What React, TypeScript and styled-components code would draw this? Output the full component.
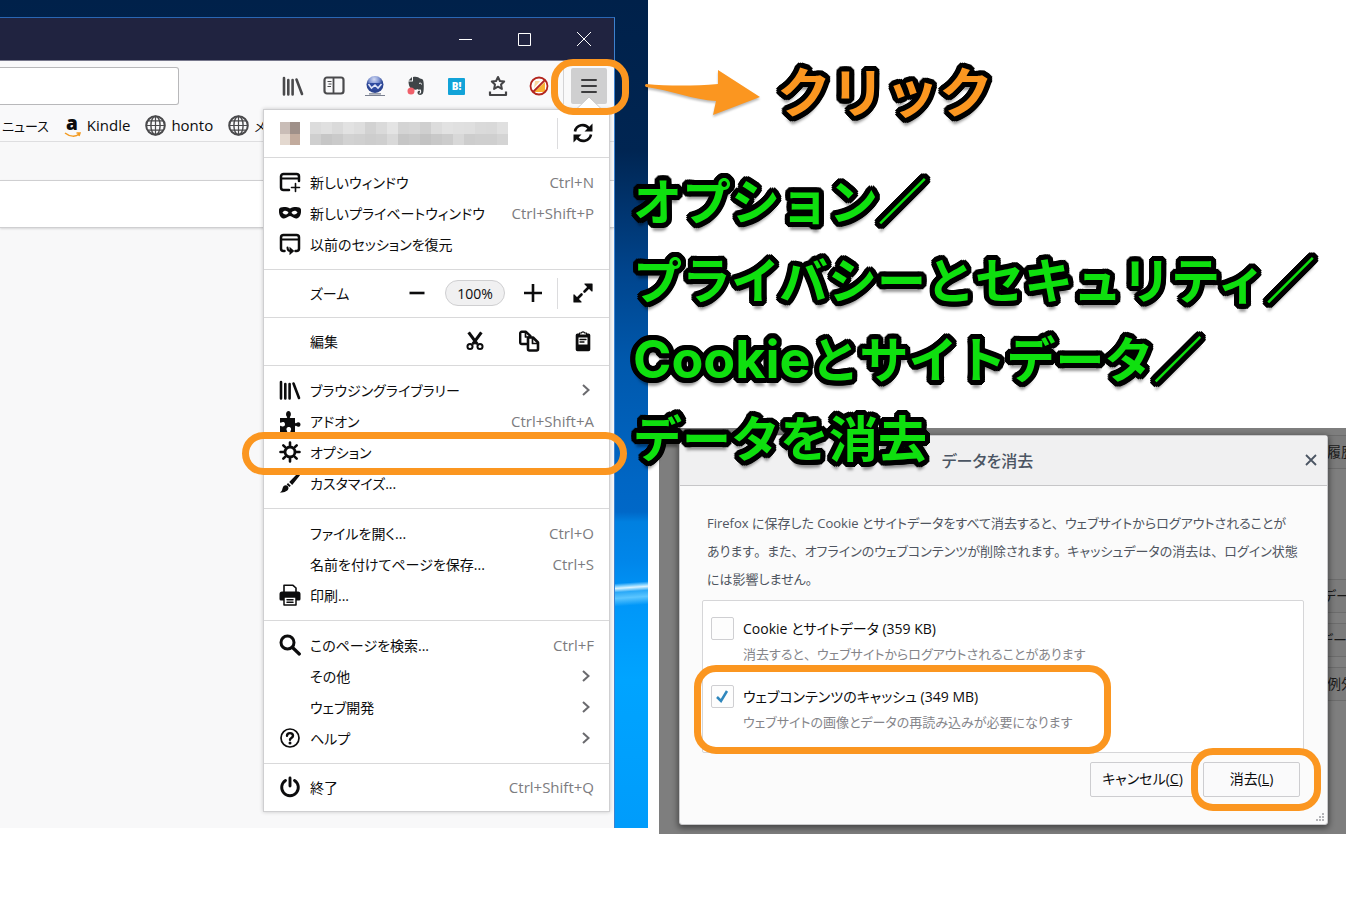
import React from 'react';
import styled, { createGlobalStyle, css } from 'styled-components';

const ORANGE = '#fb9620';

const Global = createGlobalStyle`
  * { box-sizing: border-box; }
  body {
    margin: 0;
    background: #fff;
    color: #0c0c0d;
    font-family: "Open Sans", "Noto Sans CJK JP", sans-serif;
    font-size: 14px;
    font-feature-settings: "palt";
  }
  button, input { font: inherit; color: inherit; font-feature-settings: inherit; }
  button { background: none; border: 0; padding: 0; margin: 0; }
  svg { display: block; }
`;

const Page = styled.main`
  display: grid;
  grid-template-columns: minmax(0, 648fr) minmax(0, 712fr);
  align-items: start;
  overflow: hidden;
`;

const Ring = styled.span<{ $y: number; $l: number; $r: number; $b?: number; $radius: number }>`
  position: absolute;
  z-index: 3;
  top: -${p => p.$y}px;
  bottom: -${p => p.$b ?? p.$y}px;
  left: -${p => p.$l}px;
  right: -${p => p.$r}px;
  border: 7px solid ${ORANGE};
  border-radius: ${p => p.$radius}px;
  pointer-events: none;
`;

/* ---------- desktop and browser window ---------- */

const Desktop = styled.section`
  padding: 17px 33px 0 0;
  background:
    linear-gradient(176deg, transparent 625px, #7fd0ff 628px, #d9f3ff 630px, #2aa9f8 634px, #5cc6ff 640px, transparent 648px) no-repeat,
    linear-gradient(180deg, #00214a 0, #002552 150px, #00448c 270px, #0058ac 360px, #0066c4 480px, #0068c8 512px, #0080e0 522px, #0086ea 560px, #0096f8 600px, #00a4ff 680px, #009cfb 826px);
`;

const Window = styled.div`
  border-top: 1px solid #2a66b4;
  border-right: 1px solid #3d82cf;
  background: #f9f9fa;
`;

const TitleBar = styled.header`
  display: flex;
  justify-content: flex-end;
  height: 43px;
  padding-right: 1px;
  background: #202340;
  border-bottom: 1px solid #77788c;
`;

const WindowButton = styled.button`
  display: grid;
  place-items: center;
  width: 59px;
`;

const Toolbar = styled.div`
  display: flex;
  align-items: center;
  height: 48px;
  padding: 2px 7px 0 0;
`;

const UrlInput = styled.input`
  flex: 1;
  min-width: 0;
  height: 38px;
  margin-right: 93px;
  border: 1px solid #b8b8ba;
  border-left: 0;
  border-radius: 0 3px 3px 0;
  background: #fff;
`;

const ToolButton = styled.button`
  display: grid;
  place-items: center;
  width: 41px;
  height: 36px;
  color: #4a4a4c;
`;

const MenuButtonSlot = styled.div`
  position: relative;
  margin-left: 4px;
  padding-left: 7px;
  border-left: 1px solid #d4d4d6;
`;

const MenuButton = styled.button`
  display: grid;
  place-items: center;
  width: 36px;
  height: 36px;
  border-radius: 2px;
  background: #cfcfd0;
`;

const MenuPointer = styled.svg`
  position: absolute;
  z-index: 2;
  right: 6px;
  bottom: -5px;
`;

const Below = styled.div`
  display: grid;
  > * { grid-area: 1 / 1; }
`;

const PageArea = styled.div`
  display: flex;
  flex-direction: column;
  background: #f8f8f9;
`;

const Bookmarks = styled.nav`
  display: flex;
  align-items: center;
  height: 33px;
  padding-left: 2px;
  gap: 15px;
  background: #f9f9fa;
  border-bottom: 1px solid #dedee0;
  overflow: hidden;
`;

const Bookmark = styled.a<{ $kana?: boolean }>`
  display: flex;
  align-items: center;
  flex: none;
  gap: 5px;
  font-size: ${p => (p.$kana ? 13 : 15)}px;
  color: inherit;
  text-decoration: none;
  white-space: nowrap;
`;

const PageBox = styled.div`
  height: 48px;
  margin-top: 38px;
  background: #fff;
  border: solid #cfcfd1;
  border-width: 1px 0;
  box-shadow: 0 1px 2px #0002;
`;

const Menu = styled.div`
  position: relative;
  z-index: 1;
  justify-self: end;
  width: 347px;
  margin: 0 4px 16px 0;
  border: 1px solid #cfcfd1;
  background: #fff;
  box-shadow: 0 0 4px #0003;
`;

const Group = styled.div<{ $single?: boolean; $last?: boolean }>`
  padding: ${p => (p.$single ? '0' : '8px 0 10px')};
  border-bottom: ${p => (p.$last ? 0 : 1)}px solid #d9d9da;
`;

const rowLayout = css`
  position: relative;
  display: flex;
  align-items: center;
  width: 100%;
  text-align: left;
  white-space: nowrap;
`;

const Row = styled.button<{ $tall?: boolean }>`
  ${rowLayout}
  height: ${p => (p.$tall ? 47 : 31)}px;
  padding: 0 15px ${p => (p.$tall ? 2 : 0)}px;
`;

const ControlRow = styled.div`
  ${rowLayout}
  height: 47px;
  padding: 0 15px 1px;
`;

const IconSlot = styled.span`
  display: grid;
  place-items: center;
  flex: none;
  width: 22px;
  margin-right: 9px;
`;

const Label = styled.span`
  flex: 1;
`;

const Shortcut = styled.span`
  font-size: 15px;
  color: #7c7c80;
`;

const ArrowSlot = styled.span`
  padding-right: 3px;
`;

const IconButton = styled.button<{ $gap: number }>`
  display: grid;
  place-items: center;
  width: 22px;
  height: 31px;
  margin-left: ${p => p.$gap}px;
`;

const ZoomReset = styled.button`
  width: 60px;
  height: 26px;
  margin-left: 17px;
  border: 1px solid #cfcfd1;
  border-radius: 13px;
  background: #f0f0f1;
  text-align: center;
`;

const Divider = styled.span`
  width: 1px;
  height: 31px;
  margin-left: 13px;
  background: #dcdcde;
`;

const Mosaic = styled.span<{ $cell: number }>`
  display: grid;
  grid-auto-flow: column;
  grid-template-rows: 12px 11px;
  grid-auto-columns: ${p => p.$cell}px;
`;

const Cell = styled.i<{ $c: string }>`
  background: ${p => p.$c};
`;

/* ---------- right column ---------- */

const Side = styled.section`
  display: flex;
  flex-direction: column;
  padding: 54px 14px 0 11px;
`;

/* Black outline with round corners: copies of the text set on a circle. */
const outlineOffsets = [
  [5, 0], [5, 2], [4, 3], [3, 4], [2, 5], [0, 5], [-2, 5], [-3, 4], [-4, 3], [-5, 2],
  [-5, 0], [-5, -2], [-4, -3], [-3, -4], [-2, -5], [0, -5], [2, -5], [3, -4], [4, -3], [5, -2],
  [3, 0], [0, 3], [-3, 0], [0, -3], [2, 2], [-2, 2], [-2, -2], [2, -2],
];
const outlineShadow = [...outlineOffsets.map(([x, y]) => `${x}px ${y}px 0 #000`), '0 8px 3px #0006'].join(', ');

const outlined = css`
  position: relative;
  z-index: 4;
  margin: 0;
  font-family: Inter, "Noto Sans CJK JP", sans-serif;
  font-weight: 700;
  font-feature-settings: normal;
  white-space: nowrap;
  text-shadow: ${outlineShadow};
`;

const ClickNote = styled.div`
  display: flex;
  align-items: center;
  gap: 13px;
  height: 80px;
  margin-left: -15px;
`;

const ClickText = styled.p`
  ${outlined}
  font-size: 54px;
  line-height: 80px;
  color: ${ORANGE};
`;

const NoteArrow = styled.svg`
  filter: drop-shadow(0 2px 1px #0004);
`;

const Steps = styled.p`
  ${outlined}
  margin: 29px 0 0 -26px;
  font-size: 49px;
  line-height: 79px;
  color: #0fe00f;
`;

const LatinWord = styled.span`
  font-size: 52px;
  line-height: 1;
`;

const Backdrop = styled.div`
  display: flex;
  margin-top: -51px;
  padding: 7px 0 9px 20px;
  background: #7e7e7e;
`;

const Dialog = styled.div`
  position: relative;
  z-index: 1;
  flex: 1;
  min-width: 0;
  border: 1px solid #c9c9cb;
  border-radius: 3px;
  background: #fbfbfb;
  box-shadow: 0 2px 6px 1px #0007;
`;

const DialogHeader = styled.header`
  display: flex;
  align-items: center;
  height: 50px;
  padding: 0 8px 1px 0;
  background: #f0f0f1;
  border-bottom: 1px solid #c6c6c8;
`;

const DialogTitle = styled.h2`
  flex: 1;
  margin: 0 0 0 -7px;
  font-size: 16px;
  font-weight: 500;
  text-align: center;
  color: #4b5563;
`;

const CloseButton = styled.button`
  display: grid;
  place-items: center;
  width: 17px;
  height: 24px;
`;

const DialogBody = styled.div`
  padding: 23px 23px 27px 22px;
`;

const Intro = styled.p`
  margin: 0 0 7px 5px;
  font-size: 13px;
  line-height: 28px;
  color: #4f5560;
  white-space: nowrap;
`;

const FullStop = styled.span`
  font-feature-settings: normal;
`;

const OptionList = styled.div`
  display: flex;
  flex-direction: column;
  gap: 16px;
  height: 153px;
  padding: 15px 8px 0;
  border: 1px solid #d6d6d8;
  border-radius: 2px;
  background: #fff;
`;

const Option = styled.div`
  position: relative;
  display: flex;
  gap: 9px;
  height: 52px;
`;

const CheckWrap = styled.span`
  display: grid;
  flex: none;
  height: 24px;
  place-items: center;
  > * { grid-area: 1 / 1; }
  svg { visibility: hidden; pointer-events: none; }
  input:checked + svg { visibility: visible; }
`;

const Check = styled.input`
  appearance: none;
  width: 23px;
  height: 23px;
  margin: 0;
  border: 1px solid #cfcfd2;
  border-radius: 2px;
  background: #fdfdfd;
`;

const OptionLabel = styled.label`
  display: block;
  line-height: 26px;
  white-space: nowrap;
`;

const OptionHint = styled.span`
  display: block;
  font-size: 13px;
  line-height: 25px;
  color: #85858a;
`;

const HighlightArea = styled.span`
  position: absolute;
  top: 0;
  left: 0;
  width: 384px;
  height: 52px;
  pointer-events: none;
`;

const Actions = styled.div`
  display: flex;
  justify-content: flex-end;
  gap: 8px;
  padding: 9px 4px 0 0;
`;

const ActionButton = styled.button<{ $w: number }>`
  position: relative;
  width: ${p => p.$w}px;
  height: 35px;
  padding-bottom: 3px;
  border: 1px solid #cdcdd0;
  border-radius: 2px;
  background: #fafafb;
`;

const Grip = styled.svg`
  position: absolute;
  right: 2px;
  bottom: 2px;
`;

const Behind = styled.div`
  width: 18px;
  overflow: hidden;
`;

const BehindItem = styled.div<{ $gap: number; $shift: number }>`
  height: 34px;
  margin-top: ${p => p.$gap}px;
  border: solid #6c6c6c;
  border-width: 1px 0;
  background: #7b7b7b;
  line-height: 32px;
  text-indent: -${p => p.$shift}px;
  white-space: nowrap;
  color: #1a1a1a;
`;

/* ---------- icons ---------- */

const Svg = ({ s = 22, children }: { s?: number; children: React.ReactNode }) => (
  <svg width={s} height={s} viewBox="0 0 22 22" fill="none" stroke="currentColor" strokeWidth="2" strokeLinecap="round" strokeLinejoin="round" aria-hidden="true">{children}</svg>
);

const Library = () => (
  <Svg><path d="M2 3v16.500M6.300 5v14.500M10.600 5v14.500M14.500 4.500l5.500 14.500" strokeWidth="2.600" /></Svg>
);
const NewWindow = () => (
  <Svg><path d="M10 19H4.500a2.500 2.500 0 0 1-2.500-2.500V5.500A2.500 2.500 0 0 1 4.500 3h13A2.500 2.500 0 0 1 20 5.500V10" strokeWidth="2.500" /><path d="M2 7.500h18" strokeWidth="1.800" /><path d="M16.500 12.500v8M12.500 16.500h8" strokeWidth="1.600" /></Svg>
);
const Mask = () => (
  <Svg><path fillRule="evenodd" fill="currentColor" stroke="none" d="M0 7.500C.8 4.500 7 4.500 11 6.500 15 4.500 21.200 4.500 22 7.500c.5 4.500-1.500 9-5 9-2.700 0-3.800-2.500-6-2.500s-3.300 2.500-6 2.500c-3.500 0-5.500-4.500-5-9ZM3.500 10.500c1.500 2.600 4.500 2.600 6 .2C8 8.300 5 8 3.500 10.500Zm15 0c-1.500-2.500-4.500-2.200-6 .2 1.500 2.400 4.500 2.400 6-.2Z" /></Svg>
);
const Restore = () => (
  <Svg><path d="M5.500 18H4.500A2.500 2.500 0 0 1 2 15.500V4.500A2.500 2.500 0 0 1 4.500 2h13A2.500 2.500 0 0 1 20 4.500v11a2.500 2.500 0 0 1-2.500 2.500H16.500" strokeWidth="2.500" /><path d="M2 6.500h18" strokeWidth="1.800" /><path d="M8.500 14.500c0 2.500.8 3.500 3 3.500" strokeWidth="2" /><path d="M10.500 13.800l4.800 4.200-4.800 4.200z" fill="currentColor" stroke="none" /></Svg>
);
const Puzzle = () => (
  <Svg><path fill="currentColor" stroke="none" d="M1 8h6.500c.8 0 .9-.8.3-1.400C6.600 5.300 6.800 1 9.500 1s2.900 4.300 1.700 5.600c-.6.600-.5 1.400.3 1.400H16v4.500c0 .8.800 1 1.400.4 1.300-1.200 4.100-1 4.100 1.600s-2.800 2.800-4.100 1.600c-.6-.6-1.400-.4-1.400.4V22h-4c-.7 0-.8-.8-.4-1.300 1-1.200.6-3.700-1.800-3.700s-2.800 2.500-1.800 3.700c.4.500.3 1.300-.4 1.300H1v-5.500c0-.8.600-1 1.200-.5C3.500 17 6 16.700 6 14.300s-2.500-2.600-3.800-1.700c-.6.500-1.200.2-1.200-.5Z" /></Svg>
);
const Gear = () => (
  <Svg><circle cx="11" cy="11" r="5" strokeWidth="2.800" /><path d="M11 1.500v3M11 17.500v3M1.500 11h3M17.500 11h3M4.300 4.300l2.100 2.100M15.600 15.600l2.100 2.100M4.300 17.700l2.100-2.100M15.600 6.400l2.100-2.100" strokeWidth="2.600" /></Svg>
);
const Brush = () => (
  <Svg><path fill="currentColor" stroke="none" d="M20.800 1.200c.8.800.5 1.600-.2 2.500l-7.400 9.200-3-3L18.500 1.600c.8-.7 1.600-1.100 2.300-.4ZM9 11l2.800 2.800-1.400 1.300-2.700-2.700ZM6.800 13.300c1.500 0 2.700 1.200 2.700 2.700C9.500 19 5 20.800.8 20.600c1.700-1 2.300-2 2.700-4 .4-2.100 1.600-3.300 3.300-3.300Z" /></Svg>
);
const Printer = () => (
  <Svg><path d="M5 8V1.300h9l3 2.700V8" strokeWidth="1.600" /><path d="M3 7.500h16a2.500 2.500 0 0 1 2.500 2.500V15a1.500 1.500 0 0 1-1.500 1.500H17V13H5v3.500H2A1.500 1.500 0 0 1 .5 15V10A2.500 2.500 0 0 1 3 7.500Z" fill="currentColor" stroke="none" /><path d="M5 13h12v8H5zM8 15.700h6M8 18.300h6" strokeWidth="1.500" /></Svg>
);
const Search = () => (
  <Svg><circle cx="8.500" cy="8.500" r="6.500" strokeWidth="3" /><path d="M13.500 13.500l6.800 6.500" strokeWidth="3.200" /></Svg>
);
const Help = () => (
  <Svg><circle cx="11" cy="11" r="9" strokeWidth="1.700" /><path d="M8 8.800C8 5.200 14 5.200 14 8.800c0 2.200-3 2.200-3 4" strokeWidth="2.400" /><circle cx="11" cy="16" r="1.500" fill="currentColor" stroke="none" /></Svg>
);
const Power = () => (
  <Svg><path d="M6.500 4.500a8.300 8.300 0 1 0 9 0M11 2v8" strokeWidth="2.900" /></Svg>
);
const Sync = () => (
  <Svg><path d="M3 9.500C4.200 2.800 13 .8 17 6.500M19 12.500c-1.200 6.700-10 8.700-14 3" strokeWidth="2.600" strokeLinecap="butt" /><path d="M20.500 1.500v8h-8zM1.500 20.500v-8h8z" fill="currentColor" stroke="none" /></Svg>
);
const Minus = () => <Svg><path d="M3.500 11h15" strokeWidth="2.600" strokeLinecap="butt" /></Svg>;
const Plus = () => <Svg><path d="M2 11h18M11 2v18" strokeWidth="2.600" strokeLinecap="butt" /></Svg>;
const Expand = () => (
  <Svg><path d="M4.500 17.500l5-5M12.500 9.500l5-5" strokeWidth="2.600" /><path d="M13 2h7v7zM2 13v7h7z" fill="currentColor" strokeWidth="1.200" /></Svg>
);
const Cut = () => (
  <Svg s={20}><path d="M4 1.500l9.500 13M18 1.500l-9.500 13" strokeWidth="3.400" strokeLinecap="butt" /><circle cx="5.500" cy="17" r="2.800" strokeWidth="2.200" /><circle cx="16.500" cy="17" r="2.800" strokeWidth="2.200" /></Svg>
);
const Copy = () => (
  <Svg><path d="M8.500 14H3.700A1.500 1.500 0 0 1 2.200 12.500V3.300A1.500 1.500 0 0 1 3.700 1.800H8l4.500 4.400" strokeWidth="2.400" /><path d="M7.500 2v5H12" strokeWidth="1.700" /><path d="M10.500 7.500H15l5 5v6.500a1.500 1.500 0 0 1-1.500 1.500h-7A1.500 1.500 0 0 1 10 19V8" strokeWidth="2.600" /><path d="M14.500 8v5.500H20" strokeWidth="1.700" /></Svg>
);
const Paste = () => (
  <Svg><path d="M5.500 3.500h11A1.800 1.800 0 0 1 18.300 5.300V19.500a1.800 1.800 0 0 1-1.800 1.800h-11a1.800 1.800 0 0 1-1.800-1.800V5.300A1.800 1.800 0 0 1 5.500 3.500Z" fill="currentColor" stroke="none" /><path d="M6.500 7.500h9v7h-9z" fill="#fff" stroke="none" /><path d="M8 9.500h6M8 12h4" strokeWidth="1.300" /><path d="M7.500 5V3h1.800a1.800 1.800 0 0 1 3.400 0h1.800v2z" fill="#fff" strokeWidth="1.200" /></Svg>
);
const Chevron = () => (
  <svg width="10" height="14" viewBox="0 0 10 14" fill="none" stroke="#6a6a6e" strokeWidth="2" aria-hidden="true"><path d="M2 2l5.500 5L2 12" /></svg>
);
const Globe = () => (
  <svg width="21" height="21" viewBox="0 0 21 21" fill="none" stroke="#4a4a4c" aria-hidden="true"><circle cx="10.500" cy="10.500" r="9.300" strokeWidth="2" /><ellipse cx="10.500" cy="10.500" rx="4.600" ry="9.300" strokeWidth="1.400" /><path d="M10.500 1v19M1 10.500h19M2.800 5.800h15.400M2.800 15.200h15.400" strokeWidth="1.200" /></svg>
);
const AmazonMark = styled.span`
  position: relative;
  width: 16px;
  margin-right: 2px;
  padding-bottom: 5px;
  font-weight: 800;
  font-size: 19px;
  line-height: 20px;
  text-align: center;
  svg { position: absolute; left: 0; bottom: 0; }
`;
const Sidebar = () => (
  <svg width="22" height="22" viewBox="0 0 22 22" fill="none" stroke="currentColor" aria-hidden="true"><rect x="1.500" y="2.500" width="19" height="16" rx="2.500" strokeWidth="2.200" /><path d="M10.500 3v15" strokeWidth="1.800" /><path d="M4.500 6.500h4M5.500 9h3M4.500 11.500h3.500" strokeWidth="1.200" /></svg>
);
const BlueGlobe = () => (
  <svg width="20" height="22" viewBox="0 0 20 22" aria-hidden="true">
    <defs><radialGradient id="globe" cx=".45" cy=".2"><stop offset="0" stopColor="#d3daf3" /><stop offset=".6" stopColor="#7d92d0" /><stop offset="1" stopColor="#2d458f" /></radialGradient></defs>
    <circle cx="10" cy="9.500" r="8.500" fill="url(#globe)" />
    <path d="M2 8h16l-2 5c-3 3-9 3-12 0Z" fill="#2f4ba0" />
    <path d="M3.500 9l3 4 3.500-3 3 3 3.500-4" stroke="#dfe5f8" strokeWidth="1.600" fill="none" />
    <path d="M0 20.500h20M4 18.800h12" stroke="#7a8090" strokeWidth="1.200" />
  </svg>
);
const Elephant = () => (
  <svg width="18" height="20" viewBox="0 0 18 20" aria-hidden="true">
    <path d="M6 1c3-1 6 .2 7 1.500 3 .3 3.500 1.500 3.700 5 .2 4 .1 8-.8 10-1 2-5 2-5.400-.5-.3-2 1.500-2.500 2.500-2.200v1.600c-1-.2-1.200 1-.3 1.200 2 .2 1.600-3 1-4-1.500 0-2.500.5-3-.6-1.500 1-3 .8-5.700 0C2.500 12 1.600 8.500 1.500 5.500H5c1 0 1-.5 1-1Z" fill="#3f4447" />
    <path d="M1.500 4.500L5 1v3.500z" fill="#3f4447" /><path d="M12 7.500c1.500-1 2.500-.2 2.500 1" stroke="#fff" fill="none" />
    <circle cx="4" cy="15" r="3.500" fill="#f0606a" />
  </svg>
);
const Hatena = styled.span`
  display: grid;
  place-items: center;
  width: 17px;
  height: 17px;
  border-radius: 1px;
  background: #12a3d8;
  color: #fff;
  font-size: 10px;
  font-weight: 800;
`;
const StarTray = () => (
  <svg width="20" height="22" viewBox="0 0 20 22" fill="none" stroke="#444446" strokeWidth="2" strokeLinejoin="round" aria-hidden="true"><path d="M10 2l1.900 4 4.300.5-3.200 3 .9 4.400-3.900-2.200-3.900 2.200.9-4.400-3.200-3 4.300-.5z" /><path d="M2 16.500v3.500h16v-3.500" strokeWidth="2.200" /></svg>
);
const Blocked = () => (
  <svg width="20" height="20" viewBox="0 0 20 20" aria-hidden="true"><circle cx="10" cy="10" r="8" fill="#fff" /><path d="M16 6v10H5z" fill="#f9b233" /><path d="M6 5h5L5 12z" fill="#fbd9a0" /><circle cx="10" cy="10" r="8.500" fill="none" stroke="#b3261e" strokeWidth="1.800" /><path d="M4 16L16 4" stroke="#b3261e" strokeWidth="1.800" /></svg>
);

/* ---------- menu data ---------- */

type Item = { icon?: React.ReactNode; label: string; keys?: string; sub?: boolean; ring?: boolean };

const groupA: Item[] = [
  { icon: <NewWindow />, label: '新しいウィンドウ', keys: 'Ctrl+N' },
  { icon: <Mask />, label: '新しいプライベートウィンドウ', keys: 'Ctrl+Shift+P' },
  { icon: <Restore />, label: '以前のセッションを復元' },
];
const groupB: Item[] = [
  { icon: <Library />, label: 'ブラウジングライブラリー', sub: true },
  { icon: <Puzzle />, label: 'アドオン', keys: 'Ctrl+Shift+A' },
  { icon: <Gear />, label: 'オプション', ring: true },
  { icon: <Brush />, label: 'カスタマイズ...' },
];
const groupC: Item[] = [
  { label: 'ファイルを開く...', keys: 'Ctrl+O' },
  { label: '名前を付けてページを保存...', keys: 'Ctrl+S' },
  { icon: <Printer />, label: '印刷...' },
];
const groupD: Item[] = [
  { icon: <Search />, label: 'このページを検索...', keys: 'Ctrl+F' },
  { label: 'その他', sub: true },
  { label: 'ウェブ開発', sub: true },
  { icon: <Help />, label: 'ヘルプ', sub: true },
];

const MenuItem = ({ item, tall }: { item: Item; tall?: boolean }) => (
  <Row type="button" $tall={tall}>
    <IconSlot>{item.icon}</IconSlot>
    <Label>{item.label}</Label>
    {item.keys && <Shortcut>{item.keys}</Shortcut>}
    {item.sub && <ArrowSlot><Chevron /></ArrowSlot>}
    {item.ring && <Ring $y={4} $b={8} $l={22} $r={18} $radius={22} />}
  </Row>
);

const MenuGroup = ({ items }: { items: Item[] }) => (
  <Group>{items.map(i => <MenuItem key={i.label} item={i} />)}</Group>
);

/* Sets commas and full stops on their whole square while the kana stay proportional. */
const Prose = ({ text }: { text: string }) => (
  <>{text.split(/([、。])/).map((part, i) => (i % 2 ? <FullStop key={i}>{part}</FullStop> : part))}</>
);

const faceCells = ['#c9bdb7', '#e3d8cf', '#9f9089', '#c2ab9d'];
const nameCells = ['#dcdcdc', '#cfcfcf', '#e0e0e0', '#c6c6c6', '#dadada', '#cacaca', '#e2e2e2', '#d2d2d2', '#dedede', '#d0d0d0', '#d2d2d2', '#cdcdcd', '#dadada', '#cfcfcf', '#e4e4e4', '#d9d9d9', '#d4d4d4', '#c6c6c6', '#d6d6d6', '#c9c9c9', '#cfcfcf', '#c3c3c3', '#dcdcdc', '#c8c8c8', '#e2e2e2', '#cccccc', '#e0e0e0', '#d8d8d8', '#dfdfdf', '#cdcdcd', '#dadada', '#cfcfcf', '#d9d9d9', '#cfcfcf', '#e0e0e0', '#d4d4d4'];

export default function App() {
  return (
    <Page lang="ja">
      <Global />
      <Desktop>
        <Window>
          <TitleBar>
            <WindowButton aria-label="最小化"><svg width="14" height="14" stroke="#fff"><path d="M0 7.500h13" /></svg></WindowButton>
            <WindowButton aria-label="最大化"><svg width="14" height="14" stroke="#fff" fill="none"><path d="M.5 1.500h12v12H.5z" /></svg></WindowButton>
            <WindowButton aria-label="閉じる"><svg width="14" height="14" stroke="#fff"><path d="M0 0l14 14M14 0L0 14" /></svg></WindowButton>
          </TitleBar>
          <Toolbar>
            <UrlInput aria-label="アドレス" />
            <ToolButton aria-label="ライブラリー"><Library /></ToolButton>
            <ToolButton aria-label="サイドバー"><Sidebar /></ToolButton>
            <ToolButton aria-label="地球"><BlueGlobe /></ToolButton>
            <ToolButton aria-label="Evernote"><Elephant /></ToolButton>
            <ToolButton><Hatena>B!</Hatena></ToolButton>
            <ToolButton aria-label="保存"><StarTray /></ToolButton>
            <ToolButton aria-label="ブロック"><Blocked /></ToolButton>
            <MenuButtonSlot>
              <MenuButton aria-label="メニュー"><svg width="16" height="16" stroke="#3c3c3e" strokeWidth="2" strokeLinecap="round"><path d="M1 2h14M1 8h14M1 14h14" /></svg></MenuButton>
              <MenuPointer width="24" height="13" viewBox="0 0 24 13"><path d="M0 12.500L12 1l12 11.500" fill="#fff" stroke="#c8c8ca" /></MenuPointer>
              <Ring $y={9} $b={11} $l={13} $r={22} $radius={22} />
            </MenuButtonSlot>
          </Toolbar>
          <Below>
            <PageArea>
              <Bookmarks>
                <Bookmark href="#" $kana>ニュース</Bookmark>
                <Bookmark href="#"><AmazonMark>a<svg width="18" height="6" fill="none" stroke="#f39a1f" strokeWidth="1.500"><path d="M1 1c5 4 11 4 14 1M12.500 1H16l-1 3" /></svg></AmazonMark>Kindle</Bookmark>
                <Bookmark href="#"><Globe />honto</Bookmark>
                <Bookmark href="#" $kana><Globe />メール</Bookmark>
              </Bookmarks>
              <PageBox />
            </PageArea>
            <Menu>
              <Group $single>
                <ControlRow>
                  <IconSlot><Mosaic $cell={10}>{faceCells.map((c, i) => <Cell key={i} $c={c} />)}</Mosaic></IconSlot>
                  <Label><Mosaic $cell={11}>{nameCells.map((c, i) => <Cell key={i} $c={c} />)}</Mosaic></Label>
                  <Divider />
                  <IconButton $gap={14} aria-label="同期"><Sync /></IconButton>
                </ControlRow>
              </Group>
              <MenuGroup items={groupA} />
              <Group $single>
                <ControlRow>
                  <IconSlot />
                  <Label>ズーム</Label>
                  <IconButton $gap={0} aria-label="縮小"><Minus /></IconButton>
                  <ZoomReset>100%</ZoomReset>
                  <IconButton $gap={17} aria-label="拡大"><Plus /></IconButton>
                  <Divider />
                  <IconButton $gap={14} aria-label="全画面"><Expand /></IconButton>
                </ControlRow>
              </Group>
              <Group $single>
                <ControlRow>
                  <IconSlot />
                  <Label>編集</Label>
                  <IconButton $gap={0} aria-label="切り取り"><Cut /></IconButton>
                  <IconButton $gap={32} aria-label="コピー"><Copy /></IconButton>
                  <IconButton $gap={32} aria-label="貼り付け"><Paste /></IconButton>
                </ControlRow>
              </Group>
              <MenuGroup items={groupB} />
              <MenuGroup items={groupC} />
              <MenuGroup items={groupD} />
              <Group $single $last>
                <MenuItem tall item={{ icon: <Power />, label: '終了', keys: 'Ctrl+Shift+Q' }} />
              </Group>
            </Menu>
          </Below>
        </Window>
      </Desktop>

      <Side>
        <ClickNote>
          <NoteArrow width="120" height="52" viewBox="0 0 120 52" aria-hidden="true">
            <path d="M2 16c22 2 48 2 72 0V2l42 27-47 18 3-14C50 32 26 22 2 19q-2-1.500 0-3Z" fill={ORANGE} />
          </NoteArrow>
          <ClickText>クリック</ClickText>
        </ClickNote>
        <Steps>
          オプション／<br />プライバシーとセキュリティ／<br /><LatinWord>Cookie</LatinWord>とサイトデータ／<br />データを消去
        </Steps>
        <Backdrop>
          <Dialog role="dialog" aria-labelledby="dialog-title">
            <DialogHeader>
              <DialogTitle id="dialog-title">データを消去</DialogTitle>
              <CloseButton aria-label="閉じる"><svg width="12" height="12" stroke="#4b5563" strokeWidth="1.800"><path d="M1 1l10 10M11 1L1 11" /></svg></CloseButton>
            </DialogHeader>
            <DialogBody>
              <Intro>
                <Prose text="Firefox に保存した Cookie とサイトデータをすべて消去すると、ウェブサイトからログアウトされることが" /><br />
                <Prose text="あります。また、オフラインのウェブコンテンツが削除されます。キャッシュデータの消去は、ログイン状態" /><br />
                <Prose text="には影響しません。" />
              </Intro>
              <OptionList>
                <Option>
                  <CheckWrap><Check type="checkbox" id="cookies" /><svg width="15" height="15" fill="none" stroke="#2f87bd" strokeWidth="2.500"><path d="M2 8l4 4 6-10" /></svg></CheckWrap>
                  <OptionLabel htmlFor="cookies">Cookie とサイトデータ (359 KB)<OptionHint><Prose text="消去すると、ウェブサイトからログアウトされることがあります" /></OptionHint></OptionLabel>
                </Option>
                <Option>
                  <CheckWrap><Check type="checkbox" id="cache" defaultChecked /><svg width="15" height="15" fill="none" stroke="#2f87bd" strokeWidth="2.500"><path d="M2 8l4 4 6-10" /></svg></CheckWrap>
                  <OptionLabel htmlFor="cache">ウェブコンテンツのキャッシュ (349 MB)<OptionHint>ウェブサイトの画像とデータの再読み込みが必要になります</OptionHint></OptionLabel>
                  <HighlightArea><Ring $y={19} $b={18} $l={17} $r={16} $radius={22} /></HighlightArea>
                </Option>
              </OptionList>
              <Actions>
                <ActionButton $w={105}>キャンセル(<u>C</u>)</ActionButton>
                <ActionButton $w={97}>消去(<u>L</u>)<Ring $y={15} $l={13} $r={22} $radius={22} /></ActionButton>
              </Actions>
            </DialogBody>
            <Grip width="9" height="9" fill="#b5b5b8"><path d="M6 0h2v2H6zM3 3h2v2H3zM6 3h2v2H6zM0 6h2v2H0zM3 6h2v2H3zM6 6h2v2H6z" /></Grip>
          </Dialog>
          <Behind aria-hidden="true">
            <BehindItem $gap={0} $shift={1}>履歴</BehindItem>
            <BehindItem $gap={110} $shift={5}>データ</BehindItem>
            <BehindItem $gap={10} $shift={8}>データ</BehindItem>
            <BehindItem $gap={10} $shift={1}>例外</BehindItem>
          </Behind>
        </Backdrop>
      </Side>
    </Page>
  );
}
